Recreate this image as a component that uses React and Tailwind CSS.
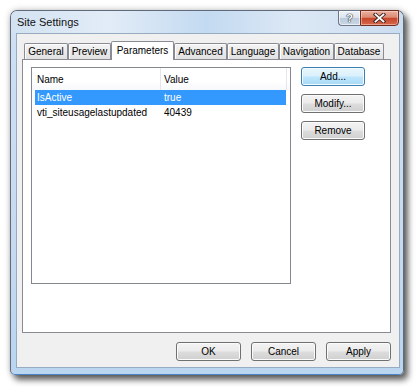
import React from "react";

const font = { fontFamily: '"Liberation Sans", Arial, sans-serif' };

const grayBtn =
  "flex items-center justify-center rounded-[3px] border border-[#707070] bg-[linear-gradient(180deg,#f3f3f3_0%,#ebebeb_48%,#dddddd_52%,#cfcfcf_100%)] shadow-[inset_0_0_0_1px_#fbfbfb] text-[10px] text-black";
const blueBtn =
  "flex items-center justify-center rounded-[3px] border border-[#3c7fb1] bg-[linear-gradient(180deg,#eaf6fd_0%,#d9f0fc_48%,#bee6fd_52%,#a7d9f5_100%)] shadow-[inset_0_0_0_1px_#f4fbff] text-[10px] text-black";

const tabs = [
  { label: "General", w: "w-[44px]" },
  { label: "Preview", w: "w-[43px]" },
  { label: "Parameters", w: "w-[63px]", sel: true },
  { label: "Advanced", w: "w-[53px]" },
  { label: "Language", w: "w-[52px]" },
  { label: "Navigation", w: "w-[55px]" },
  { label: "Database", w: "w-[50px]" },
];

function Tab({ t }) {
  if (t.sel) {
    return (
      <div
        className={`${t.w} relative z-10 -mb-px flex h-[19px] items-center justify-center rounded-t-[2px] border border-b-0 border-[#898c95] bg-white pb-[1px] text-[10px] text-black`}
      >
        {t.label}
      </div>
    );
  }
  return (
    <div
      className={`${t.w} flex h-[16px] items-center justify-center rounded-t-[2px] border border-b-0 border-[#898c95] bg-[linear-gradient(180deg,#f4f4f4_0%,#e9e9e9_60%,#e1e1e1_100%)] shadow-[inset_1px_1px_0_#fdfdfd] text-[10px] text-black`}
    >
      {t.label}
    </div>
  );
}

export default function App() {
  return (
    <div className="h-[388px] w-[416px] overflow-hidden bg-white pl-[10px] pt-[10px]" style={font}>
      <div className="flex h-[365px] w-[394px] flex-col rounded-t-[7px] rounded-b-[5px] border border-[#5f6b7a] border-b-[#4a86c4] bg-[linear-gradient(180deg,#d5e4f3_0%,#cddff2_10%,#c7dbf0_60%,#b9d5f0_100%)] shadow-[4px_5px_6px_rgba(0,0,0,0.6),0_0_6px_rgba(0,0,0,0.25)]">
        {/* Title bar */}
        <div className="flex h-[22px] items-start rounded-t-[6px] bg-[linear-gradient(90deg,#d3e2f2_0%,#e2ecf7_25%,#c3daf1_50%,#dce8f5_72%,#cbdcef_100%)]">
          <div className="flex h-[22px] flex-1 items-center pl-[6px] text-[11px] text-[#111]">
            Site Settings
          </div>
          <div className="mr-[4px] -mt-px flex h-[16px]">
            <div className="flex h-[16px] w-[22px] items-center justify-center rounded-bl-[4px] border border-r-0 border-[#6b7788] bg-[linear-gradient(180deg,#eef3f8_0%,#dbe4ee_48%,#bccbdc_52%,#c9d6e4_100%)] shadow-[inset_0_0_0_1px_rgba(255,255,255,0.6)]">
              <span className="text-[11px] font-bold leading-none text-white [text-shadow:0_0_1px_#2b3440,0_0_1px_#2b3440,0_0_1px_#2b3440]">
                ?
              </span>
            </div>
            <div className="flex h-[16px] w-[39px] items-center justify-center rounded-br-[4px] border border-[#6e2f22] bg-[linear-gradient(180deg,#eab1a2_0%,#dc8a72_45%,#c7452b_52%,#d8694c_100%)] shadow-[inset_0_0_0_1px_rgba(255,220,210,0.5)]">
              <svg width="13" height="10" viewBox="0 0 13 10">
                <path d="M2.5 1.5 L10.5 8.5 M10.5 1.5 L2.5 8.5" stroke="#3b231d" strokeWidth="3.6" strokeLinecap="square" />
                <path d="M2.5 1.5 L10.5 8.5 M10.5 1.5 L2.5 8.5" stroke="#ffffff" strokeWidth="1.8" strokeLinecap="square" />
              </svg>
            </div>
          </div>
        </div>

        {/* Client area */}
        <div className="mb-[6px] ml-[5px] mr-[3px] flex flex-1 flex-col border border-[#97abc1] bg-[#f0f0f0] pl-[5px] pr-[8px] pt-[7px] pb-[6px]">
          {/* Tab strip */}
          <div className="flex h-[18px] items-end pl-[2px]">
            {tabs.map((t) => (
              <Tab key={t.label} t={t} />
            ))}
          </div>

          {/* Tab panel */}
          <div className="flex h-[274px] border border-[#898c95] bg-white pl-[8px] pt-[7px]">
            {/* List view */}
            <div className="flex h-[217px] w-[260px] flex-col border border-[#828790] bg-white text-[10px] text-black">
              <div className="flex h-[22px] shrink-0 bg-[linear-gradient(180deg,#ffffff_0%,#ffffff_60%,#f7f8fa_100%)]">
                <div className="flex w-[129px] items-center border-r border-[#e3e6ea] pl-[5px]">Name</div>
                <div className="flex w-[126px] items-center border-r border-[#e3e6ea] pl-[3px]">Value</div>
              </div>
              <div className="ml-[3px] flex h-[15px] w-[251px] items-center bg-[#3399ff] text-white">
                <div className="w-[125px] pl-[2px]">IsActive</div>
                <div className="pl-[4px]">true</div>
              </div>
              <div className="ml-[3px] flex h-[15px] w-[251px] items-center">
                <div className="w-[125px] pl-[2px]">vti_siteusagelastupdated</div>
                <div className="pl-[4px]">40439</div>
              </div>
            </div>

            {/* Side buttons */}
            <div className="ml-[10px] flex w-[64px] flex-col gap-[8px]">
              <div className={`${blueBtn} h-[19px]`}>Add...</div>
              <div className={`${grayBtn} h-[19px]`}>Modify...</div>
              <div className={`${grayBtn} h-[19px]`}>Remove</div>
            </div>
          </div>

          {/* Dialog buttons */}
          <div className="mt-[9px] flex h-[19px] justify-end gap-[10px]">
            <div className={`${grayBtn} w-[65px]`}>OK</div>
            <div className={`${grayBtn} w-[65px]`}>Cancel</div>
            <div className={`${grayBtn} w-[65px]`}>Apply</div>
          </div>
        </div>
      </div>
    </div>
  );
}
